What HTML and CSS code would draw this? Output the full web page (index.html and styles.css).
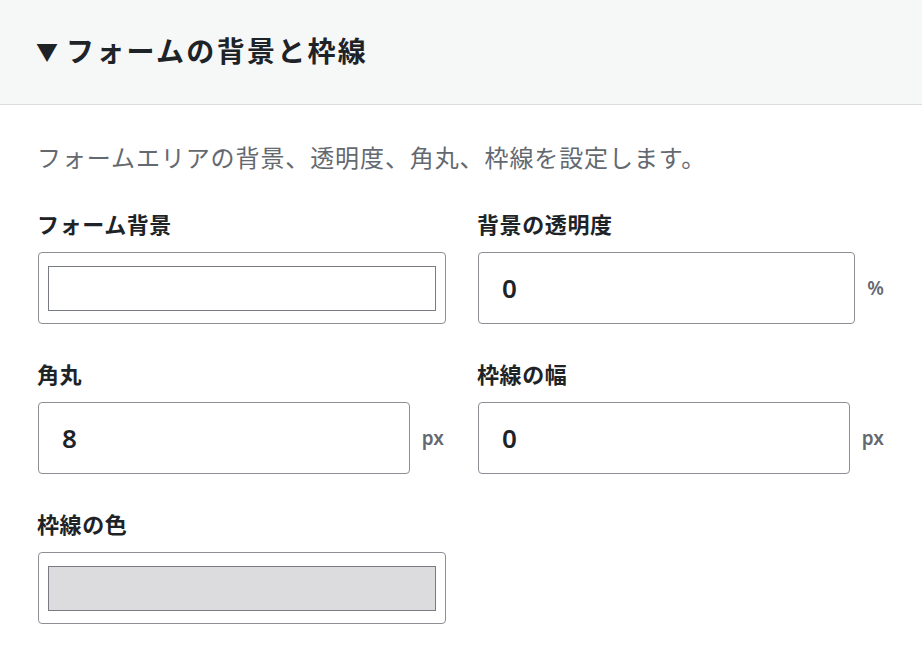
FILE: index.html
```html
<!DOCTYPE html>
<html lang="ja">
<head>
    <meta charset="UTF-8">
    <meta name="viewport" content="width=device-width, initial-scale=1.0">
    <title>フォームの背景と枠線</title>
    <link rel="stylesheet" href="styles.css">
</head>
<body>
    <div class="postbox">
        <div class="postbox-header">
            <h2><span class="toggle">▼</span>フォームの背景と枠線</h2>
        </div>
        <div class="inside">
            <p class="description">フォームエリアの背景、透明度、角丸、枠線を設定します。</p>

            <div class="field-grid">
                <div class="field">
                    <label>フォーム背景</label>
                    <button type="button" class="color-button">
                        <span class="swatch"></span>
                    </button>
                </div>
                <div class="field">
                    <label for="bg_opacity">背景の透明度</label>
                    <div class="unit-input">
                        <input type="text" id="bg_opacity" value="0">
                        <span class="unit">%</span>
                    </div>
                </div>

                <div class="field">
                    <label for="radius">角丸</label>
                    <div class="unit-input">
                        <input type="text" id="radius" value="8">
                        <span class="unit">px</span>
                    </div>
                </div>
                <div class="field">
                    <label for="border_width">枠線の幅</label>
                    <div class="unit-input">
                        <input type="text" id="border_width" value="0">
                        <span class="unit">px</span>
                    </div>
                </div>

                <div class="field">
                    <label>枠線の色</label>
                    <button type="button" class="color-button">
                        <span class="swatch swatch-gray"></span>
                    </button>
                </div>
            </div>
        </div>
    </div>
</body>
</html>
```

FILE: styles.css
```css
body, html {
    margin: 0;
    padding: 0;
    background: #fff;
    font-family: "Noto Sans CJK JP", "Noto Sans", sans-serif;
    color: #1d2327;
}

.postbox-header {
    height: 105px;
    box-sizing: border-box;
    padding: 0 0 5px 36px;
    background-color: #f6f7f7;
    border-bottom: 1px solid #dcdcde;
    display: flex;
    align-items: center;
}

.postbox-header h2 {
    margin: 0;
    font-size: 28px;
    font-weight: 700;
    letter-spacing: 2.3px;
    line-height: 1;
}

.toggle {
    display: inline-block;
    width: 30px;
    font-size: 22px;
    vertical-align: 2px;
}

.inside {
    padding: 34px 36px 30px 38px;
}

.description {
    margin: 0 0 33px -1px;
    font-size: 24px;
    line-height: 36px;
    letter-spacing: 0.9px;
    color: #646970;
}

.field-grid {
    display: grid;
    grid-template-columns: 408px 408px;
    column-gap: 32px;
    row-gap: 34px;
}

.field label {
    display: block;
    margin: 0 0 14px -1px;
    font-size: 22px;
    font-weight: 700;
    line-height: 30px;
    letter-spacing: 0.6px;
}

.color-button {
    display: block;
    width: 100%;
    height: 72px;
    box-sizing: border-box;
    padding: 13px 9px;
    background: #fff;
    border: 1px solid #8c8f94;
    border-radius: 4px;
    cursor: pointer;
}

.swatch {
    display: block;
    height: 45px;
    box-sizing: border-box;
    border: 1px solid #787c82;
    background: #fff;
}

.swatch-gray {
    background: #dcdcde;
}

.unit-input {
    display: flex;
    align-items: center;
    gap: 12px;
}

.unit-input input {
    flex: 1;
    min-width: 0;
    height: 72px;
    box-sizing: border-box;
    padding: 0 23px;
    border: 1px solid #8c8f94;
    border-radius: 4px;
    font-family: "Noto Sans", sans-serif;
    font-size: 26px;
    font-weight: 600;
    color: #1d2327;
}

.unit {
    padding-right: 2px;
    font-family: "Noto Sans", sans-serif;
    font-size: 19px;
    font-weight: 600;
    color: #646970;
}
```
